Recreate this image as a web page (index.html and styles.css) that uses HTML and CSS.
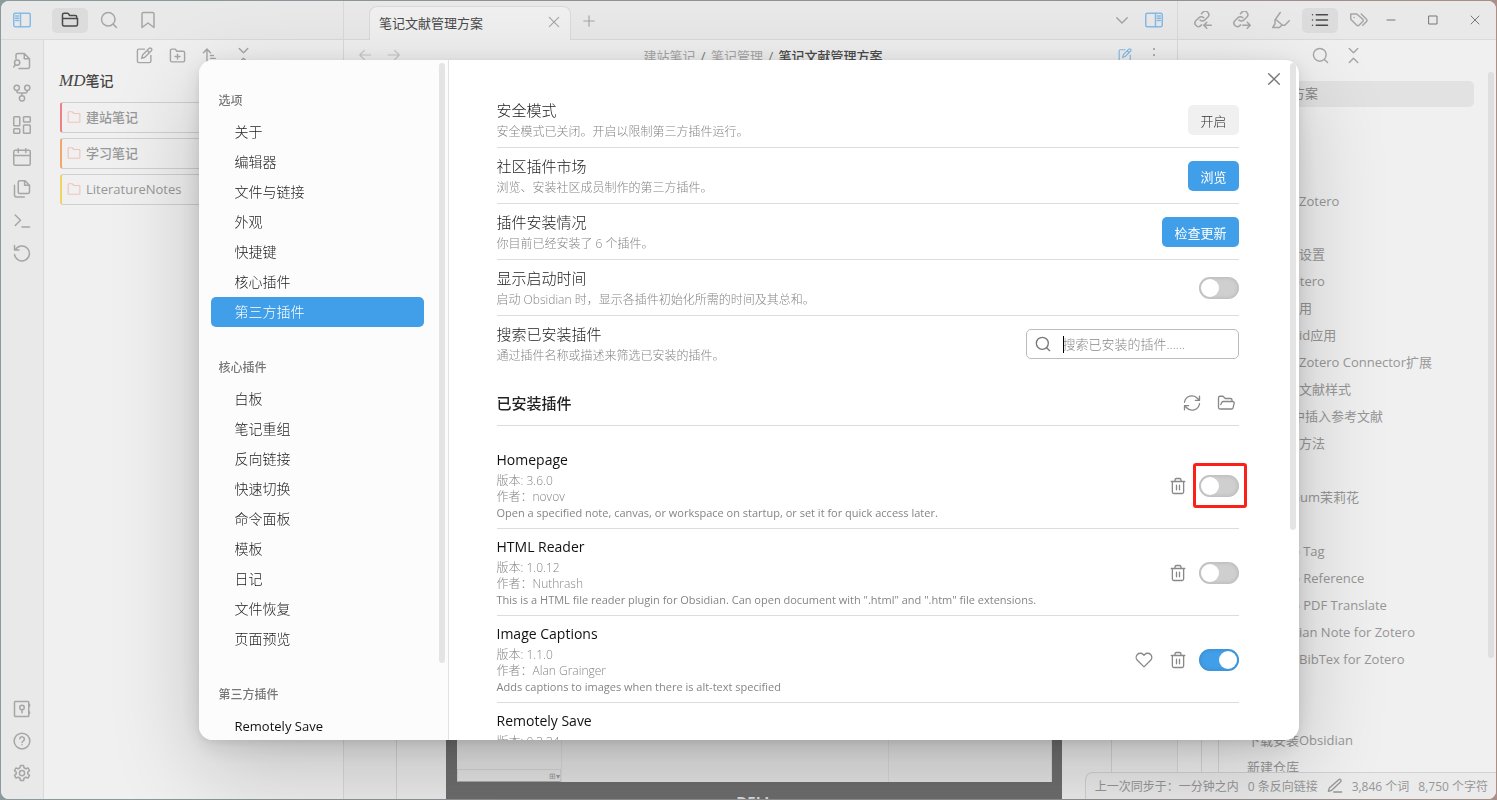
FILE: index.html
```html
<!DOCTYPE html>
<html lang="zh-CN">
<head>
<meta charset="utf-8">
<title>笔记文献管理方案</title>
<link rel="stylesheet" href="styles.css">
</head>
<body>
<svg class="sprite" aria-hidden="true">
  <symbol id="i-folder" viewBox="0 0 24 24"><path d="M20 20H4a2 2 0 0 1-2-2V5a2 2 0 0 1 2-2h4.500a2 2 0 0 1 1.600.800L11.500 6H19a2 2 0 0 1 2 2v2M2 10h20v8a2 2 0 0 1-2 2"/></symbol>
  <symbol id="i-search" viewBox="0 0 24 24"><circle cx="11" cy="11" r="9"/><path d="m22 22-4.500-4.500"/></symbol>
  <symbol id="i-bookmark" viewBox="0 0 24 24"><path d="m20 22-8-6-8 6V4a2 2 0 0 1 2-2h12a2 2 0 0 1 2 2z"/></symbol>
  <symbol id="i-side-left" viewBox="0 0 24 24"><rect x="1" y="3" width="22" height="18" rx="2"/><path d="M10 3v18M3.500 6.500h4M3.500 9.500h4M3.500 12.500h4"/></symbol>
  <symbol id="i-side-right" viewBox="0 0 24 24"><rect x="1" y="3" width="22" height="18" rx="2"/><path d="M14 3v18M16.500 6.500h4M16.500 9.500h4M16.500 12.500h4"/></symbol>
  <symbol id="i-file-search" viewBox="0 0 24 24"><path d="M4 9V4a2 2 0 0 1 2-2h9l7 7v11a2 2 0 0 1-2 2H8M15 2v7h7"/><circle cx="5.500" cy="14" r="3.500"/><path d="m1 20 2-3"/></symbol>
  <symbol id="i-fork" viewBox="0 0 24 24"><circle cx="5" cy="5" r="3.500"/><circle cx="19" cy="5" r="3.500"/><circle cx="12" cy="19" r="3.500"/><path d="M5 9v0a3 3 0 0 0 3 3h8a3 3 0 0 0 3-3M12 12v3"/></symbol>
  <symbol id="i-dashboard" viewBox="0 0 24 24"><rect x="1" y="1" width="8" height="12" rx="1"/><rect x="14" y="1" width="9" height="7" rx="1"/><rect x="14" y="12" width="9" height="11" rx="1"/><rect x="1" y="17" width="8" height="6" rx="1"/></symbol>
  <symbol id="i-calendar" viewBox="0 0 24 24"><rect x="1" y="3" width="22" height="20" rx="2"/><path d="M7 1v5M17 1v5M1 10h22"/></symbol>
  <symbol id="i-files" viewBox="0 0 24 24"><path d="M16 1H9a2 2 0 0 0-2 2v13a2 2 0 0 0 2 2h11a2 2 0 0 0 2-2V7zM15.500 1v6H22M2 7v13a2.500 2.500 0 0 0 2.500 2.500H15"/></symbol>
  <symbol id="i-terminal" viewBox="0 0 24 24"><path d="m3 18 7-7-7-7M12 20h10"/></symbol>
  <symbol id="i-undo" viewBox="0 0 24 24"><path d="M2 2v6h6M3 8a10 10 0 1 1-1 6"/></symbol>
  <symbol id="i-vault" viewBox="0 0 24 24"><rect x="2" y="2" width="19" height="20" rx="1"/><circle cx="12" cy="10" r="3"/><path d="M12 13v4M22 6v2M22 16v2"/></symbol>
  <symbol id="i-help" viewBox="0 0 24 24"><circle cx="12" cy="12" r="10.500"/><path d="M9 9a3 3 0 0 1 6 1c0 2-3 2.500-3 4M12 17v.1"/></symbol>
  <symbol id="i-gear" viewBox="0 0 24 24"><path d="M10 2h4l.7 3 2.300 1.300 3-1 2 3.500-2.300 2.100v2.200l2.300 2.100-2 3.500-3-1-2.300 1.300-.7 3h-4l-.7-3L7 17.700l-3 1-2-3.500 2.300-2.100v-2.200L2 8.800l2-3.500 3 1L9.300 5z"/><circle cx="12" cy="12" r="3.500"/></symbol>
  <symbol id="i-edit" viewBox="0 0 24 24"><path d="M12 3H4a2 2 0 0 0-2 2v15a2 2 0 0 0 2 2h15a2 2 0 0 0 2-2v-8M18.400 2a2.200 2.200 0 0 1 3.200 3.200L12.500 14.500 8 16l1.300-4.600zM16 5l3 3"/></symbol>
  <symbol id="i-folder-plus" viewBox="0 0 24 24"><path d="M20 21H4a2 2 0 0 1-2-2V5a2 2 0 0 1 2-2h5l2 3h9a2 2 0 0 1 2 2v11a2 2 0 0 1-2 2zM12 10v7M8.500 13.500h7"/></symbol>
  <symbol id="i-sort" viewBox="0 0 24 24"><path d="m2 8 5-5 5 5M7 3v18M12 12h4M12 16h7M12 20h10"/></symbol>
  <symbol id="i-collapse" viewBox="0 0 24 24"><path d="m6 22 6-6 6 6M6 2l6 6 6-6"/></symbol>
  <symbol id="i-folder-flat" viewBox="0 0 24 24"><path d="M21 21H3a1 1 0 0 1-1-1V4a1 1 0 0 1 1-1h6l3 3h9a1 1 0 0 1 1 1v13a1 1 0 0 1-1 1z"/></symbol>
  <symbol id="i-close" viewBox="0 0 24 24"><path d="M4 4l16 16M20 4 4 20"/></symbol>
  <symbol id="i-plus" viewBox="0 0 24 24"><path d="M3 12h18M12 3v18"/></symbol>
  <symbol id="i-left" viewBox="0 0 24 24"><path d="M11 4l-8 8 8 8M3 12h19"/></symbol>
  <symbol id="i-right" viewBox="0 0 24 24"><path d="m13 4 8 8-8 8M21 12H2"/></symbol>
  <symbol id="i-chevron" viewBox="0 0 24 24"><path d="m5 9 7 7 7-7"/></symbol>
  <symbol id="i-dots" viewBox="0 0 24 24"><path d="M12 4v.1M12 12v.1M12 20v.1"/></symbol>
  <symbol id="i-link-in" viewBox="0 0 24 24"><path d="M8 12a4.500 4.500 0 0 0 6.500 0l4-4a4.600 4.600 0 0 0-6.500-6.500L10 3.500M13 9a4.500 4.500 0 0 0-6.500 0l-4 4A4.600 4.600 0 0 0 9 19.500l1-1M23 19h-9M17 15l-4 4 4 4"/></symbol>
  <symbol id="i-link-out" viewBox="0 0 24 24"><path d="M8 12a4.500 4.500 0 0 0 6.500 0l4-4a4.600 4.600 0 0 0-6.500-6.500L10 3.500M13 9a4.500 4.500 0 0 0-6.500 0l-4 4A4.600 4.600 0 0 0 9 19.500l1-1M13 19h9M19 15l4 4-4 4"/></symbol>
  <symbol id="i-marker" viewBox="0 0 24 24"><path d="m11 2-7 10v5l-3 5h9l3-3h4l6-6M6 12l8 7"/></symbol>
  <symbol id="i-list" viewBox="0 0 24 24"><path d="M7 5h15M7 12h15M7 19h15M2 5v.1M2 12v.1M2 19v.1"/></symbol>
  <symbol id="i-tags" viewBox="0 0 24 24"><path d="M1 4v7l8 8a2 2 0 0 0 3 0l5-5a2 2 0 0 0 0-3L9 4zM15 4l7 7a2 2 0 0 1 0 3l-5 5M5.500 8.500v.1"/></symbol>
  <symbol id="i-min" viewBox="0 0 24 24"><path d="M4 12h16"/></symbol>
  <symbol id="i-max" viewBox="0 0 24 24"><rect x="4" y="4" width="16" height="16"/></symbol>
  <symbol id="i-refresh" viewBox="0 0 24 24"><path d="M2 11a10 10 0 0 1 17.500-5L22 8.500M22 3v5.500h-5.500M22 13a10 10 0 0 1-17.500 5L2 15.500M2 21v-5.500h5.500"/></symbol>
  <symbol id="i-folder-open" viewBox="0 0 24 24"><path d="m5 14 1.500-2.900A2 2 0 0 1 8.200 10H21a2 2 0 0 1 1.900 2.500l-1.500 6a2 2 0 0 1-1.900 1.500H4a2 2 0 0 1-2-2V5a2 2 0 0 1 2-2h4l3 3h7a2 2 0 0 1 2 2v2"/></symbol>
  <symbol id="i-trash" viewBox="0 0 24 24"><path d="M3 6h18M19.500 6v14a2 2 0 0 1-2 2h-11a2 2 0 0 1-2-2V6M8 6V4a2 2 0 0 1 2-2h4a2 2 0 0 1 2 2v2M10 11v6M14 11v6"/></symbol>
  <symbol id="i-heart" viewBox="0 0 24 24"><path d="M20.800 4.600a5.500 5.500 0 0 0-7.800 0L12 5.700l-1-1.100a5.500 5.500 0 0 0-7.800 7.800L12 21.200l8.800-8.800a5.500 5.500 0 0 0 0-7.800z"/></symbol>
  <symbol id="i-pen" viewBox="0 0 24 24"><path d="M10 21h12M17.500 2.500a2 2 0 0 1 3 3L7 18.500 2 20l1.500-5z"/></symbol>
</svg>

<div class="window">
  <section class="col col-left">
    <header class="bar">
      <button class="ico accent" aria-label="侧边栏"><svg><use href="#i-side-left"/></svg></button>
      <div class="tabs">
        <button class="ico tab-ico active" aria-label="文件列表"><svg><use href="#i-folder"/></svg></button>
        <button class="ico tab-ico" aria-label="搜索"><svg><use href="#i-search"/></svg></button>
        <button class="ico tab-ico" aria-label="书签"><svg><use href="#i-bookmark"/></svg></button>
      </div>
    </header>
    <div class="left-body">
      <nav class="ribbon">
        <button class="ico" aria-label="快速切换"><svg><use href="#i-file-search"/></svg></button>
        <button class="ico" aria-label="关系图谱"><svg><use href="#i-fork"/></svg></button>
        <button class="ico" aria-label="白板"><svg><use href="#i-dashboard"/></svg></button>
        <button class="ico" aria-label="日记"><svg><use href="#i-calendar"/></svg></button>
        <button class="ico" aria-label="模板"><svg><use href="#i-files"/></svg></button>
        <button class="ico" aria-label="命令面板"><svg><use href="#i-terminal"/></svg></button>
        <button class="ico" aria-label="同步"><svg><use href="#i-undo"/></svg></button>
        <span class="grow"></span>
        <button class="ico" aria-label="仓库"><svg><use href="#i-vault"/></svg></button>
        <button class="ico" aria-label="帮助"><svg><use href="#i-help"/></svg></button>
        <button class="ico" aria-label="设置"><svg><use href="#i-gear"/></svg></button>
      </nav>
      <div class="files">
        <div class="tools">
          <button class="ico" aria-label="新建笔记"><svg><use href="#i-edit"/></svg></button>
          <button class="ico" aria-label="新建文件夹"><svg><use href="#i-folder-plus"/></svg></button>
          <button class="ico" aria-label="排序"><svg><use href="#i-sort"/></svg></button>
          <button class="ico" aria-label="折叠"><svg><use href="#i-collapse"/></svg></button>
        </div>
        <h2 class="vault"><em>MD</em>笔记</h2>
        <ul class="tree">
          <li class="red"><svg><use href="#i-folder-flat"/></svg>建站笔记</li>
          <li class="orange"><svg><use href="#i-folder-flat"/></svg>学习笔记</li>
          <li class="yellow"><svg><use href="#i-folder-flat"/></svg>LiteratureNotes</li>
        </ul>
      </div>
    </div>
  </section>

  <section class="col col-main">
    <header class="bar bar-main">
      <div class="doc-tab"><span>笔记文献管理方案</span><button class="ico small" aria-label="关闭标签页"><svg><use href="#i-close"/></svg></button></div>
      <button class="ico small plus" aria-label="新标签页"><svg><use href="#i-plus"/></svg></button>
      <span class="grow"></span>
      <button class="ico" aria-label="标签列表"><svg><use href="#i-chevron"/></svg></button>
      <button class="ico accent" aria-label="右侧边栏"><svg><use href="#i-side-right"/></svg></button>
    </header>
    <div class="view-head">
      <button class="ico faint" aria-label="后退"><svg><use href="#i-left"/></svg></button>
      <button class="ico faint" aria-label="前进"><svg><use href="#i-right"/></svg></button>
      <div class="crumbs">建站笔记 <i>/</i> 笔记管理 <i>/</i> <b>笔记文献管理方案</b></div>
      <button class="ico small accent" aria-label="编辑"><svg><use href="#i-edit"/></svg></button>
      <button class="ico dots" aria-label="更多选项"><svg><use href="#i-dots"/></svg></button>
    </div>
    <div class="note">
      <div class="gutter"></div>
      <div class="photo">
        <div class="screen">
          <div class="pane"><div class="field"><span>⊞▾</span></div></div>
          <div class="pane"></div>
          <div class="pane"></div>
        </div>
        <div class="brand">DELL</div>
      </div>
      <div class="gutter gutter-right"></div>
    </div>
  </section>

  <section class="col col-right">
    <header class="bar bar-right">
      <div class="tabs">
        <button class="ico tab-ico" aria-label="反向链接"><svg><use href="#i-link-in"/></svg></button>
        <button class="ico tab-ico" aria-label="出链"><svg><use href="#i-link-out"/></svg></button>
        <button class="ico tab-ico" aria-label="标注"><svg><use href="#i-marker"/></svg></button>
        <button class="ico tab-ico active" aria-label="大纲"><svg><use href="#i-list"/></svg></button>
        <button class="ico tab-ico" aria-label="标签"><svg><use href="#i-tags"/></svg></button>
      </div>
      <div class="win-btns">
        <button class="ico" aria-label="最小化"><svg><use href="#i-min"/></svg></button>
        <button class="ico" aria-label="最大化"><svg><use href="#i-max"/></svg></button>
        <button class="ico" aria-label="关闭"><svg><use href="#i-close"/></svg></button>
      </div>
    </header>
    <div class="right-body">
      <div class="outline-col">
        <div class="tools tools-right">
          <button class="ico" aria-label="搜索"><svg><use href="#i-search"/></svg></button>
          <button class="ico" aria-label="折叠"><svg><use href="#i-collapse"/></svg></button>
        </div>
        <div class="guide"><ul class="outline">
          <li class="cut current">方案</li>
          <li></li><li></li><li></li>
          <li>Zotero</li>
          <li class="gap"></li>
          <li>设置</li>
          <li class="cut">otero</li>
          <li>用</li>
          <li>id应用</li>
          <li>Zotero Connector扩展</li>
          <li>文献样式</li>
          <li class="cut">中插入参考文献</li>
          <li>方法</li>
          <li></li>
          <li class="cut">num茉莉花</li>
          <li class="cut">e</li>
          <li class="cut">o Tag</li>
          <li class="cut">o Reference</li>
          <li class="cut">o PDF Translate</li>
          <li>ian Note for Zotero</li>
          <li>BibTex for Zotero</li>
          <li></li><li></li>
          <li class="top">下载安装Obsidian</li>
          <li class="top">新建仓库</li>
        </ul></div>
      </div>
      <div class="rail"><div class="thumb"></div></div>
    </div>
  </section>

  <footer class="status">
    <span>上一次同步于：一分钟之内</span>
    <span>0 条反向链接</span>
    <svg><use href="#i-pen"/></svg>
    <span>3,846 个词</span>
    <span>8,750 个字符</span>
  </footer>
</div>

<div class="backdrop">
  <div class="modal" role="dialog" aria-label="设置">
    <nav class="settings-nav">
      <div class="nav-scroll">
        <div class="group">
          <h3>选项</h3>
          <button>关于</button><button>编辑器</button><button>文件与链接</button><button>外观</button><button>快捷键</button><button>核心插件</button><button class="selected">第三方插件</button>
        </div>
        <div class="group">
          <h3>核心插件</h3>
          <button>白板</button><button>笔记重组</button><button>反向链接</button><button>快速切换</button><button>命令面板</button><button>模板</button><button>日记</button><button>文件恢复</button><button>页面预览</button>
        </div>
        <div class="group">
          <h3>第三方插件</h3>
          <button class="latin">Remotely Save</button>
        </div>
      </div>
      <div class="rail nav-rail"><div class="thumb"></div></div>
    </nav>
    <main class="content">
      <div class="setting">
        <div class="info"><div class="name">安全模式</div><div class="desc">安全模式已关闭。开启以限制第三方插件运行。</div></div>
        <button class="btn">开启</button>
      </div>
      <div class="setting">
        <div class="info"><div class="name">社区插件市场</div><div class="desc">浏览、安装社区成员制作的第三方插件。</div></div>
        <button class="btn cta">浏览</button>
      </div>
      <div class="setting">
        <div class="info"><div class="name">插件安装情况</div><div class="desc">你目前已经安装了 6 个插件。</div></div>
        <button class="btn cta">检查更新</button>
      </div>
      <div class="setting">
        <div class="info"><label class="name" for="t-time">显示启动时间</label><div class="desc">启动 Obsidian 时，显示各插件初始化所需的时间及其总和。</div></div>
        <input class="toggle" type="checkbox" id="t-time">
      </div>
      <div class="setting last">
        <div class="info"><label class="name" for="q">搜索已安装插件</label><div class="desc">通过插件名称或描述来筛选已安装的插件。</div></div>
        <div class="search"><svg><use href="#i-search"/></svg><input id="q" type="text" placeholder="搜索已安装的插件......"><span class="caret"></span></div>
      </div>
      <div class="section-head">
        <h2>已安装插件</h2>
        <button class="ico act" aria-label="重新加载插件"><svg><use href="#i-refresh"/></svg></button>
        <button class="ico act" aria-label="打开插件文件夹"><svg><use href="#i-folder-open"/></svg></button>
      </div>
      <div class="setting plugin">
        <div class="info"><label class="name" for="p1">Homepage</label><div class="desc">版本: 3.6.0<br>作者：novov<p>Open a specified note, canvas, or workspace on startup, or set it for quick access later.</p></div></div>
        <button class="ico act" aria-label="卸载"><svg><use href="#i-trash"/></svg></button>
        <span class="marked"><input class="toggle" type="checkbox" id="p1"></span>
      </div>
      <div class="setting plugin">
        <div class="info"><label class="name" for="p2">HTML Reader</label><div class="desc">版本: 1.0.12<br>作者：Nuthrash<p>This is a HTML file reader plugin for Obsidian. Can open document with ".html" and ".htm" file extensions.</p></div></div>
        <button class="ico act" aria-label="卸载"><svg><use href="#i-trash"/></svg></button>
        <input class="toggle" type="checkbox" id="p2">
      </div>
      <div class="setting plugin">
        <div class="info"><label class="name" for="p3">Image Captions</label><div class="desc">版本: 1.1.0<br>作者：Alan Grainger<p>Adds captions to images when there is alt-text specified</p></div></div>
        <button class="ico act" aria-label="赞助"><svg><use href="#i-heart"/></svg></button>
        <button class="ico act" aria-label="卸载"><svg><use href="#i-trash"/></svg></button>
        <input class="toggle" type="checkbox" id="p3" checked>
      </div>
      <div class="setting plugin">
        <div class="info"><div class="name">Remotely Save</div><div class="desc">版本: 0.3.34</div></div>
      </div>
    </main>
    <div class="rail modal-rail"><div class="thumb"></div></div>
    <button class="ico modal-close" aria-label="关闭设置"><svg><use href="#i-close"/></svg></button>
  </div>
</div>
</body>
</html>
```

FILE: styles.css
```css
* { box-sizing: border-box; }
html, body { height: 100%; margin: 0; }
body {
  padding: 1px;
  overflow: hidden;
  background: linear-gradient(to right, #8b9a9c, #8e9196 40%, #8e9196 70%, #a98f86);
  font-family: "Open Sans", "Noto Sans CJK SC", sans-serif;
  font-size: 13px;
  color: #979797;
}
h2, h3, ul, p { margin: 0; padding: 0; font-size: inherit; }
ul { list-style: none; }
button, input { font: inherit; color: inherit; }
button { border: 0; padding: 0; background: none; }
.sprite { display: none; }
svg { width: 18px; height: 18px; flex: none; fill: none; stroke: currentColor; stroke-width: 2; stroke-linecap: round; stroke-linejoin: round; }
.grow { flex: 1; }
.ico { display: flex; align-items: center; justify-content: center; flex: none; color: #a6a6a6; }
.ico.small svg { width: 14px; height: 14px; }
.ico.accent { color: #86bbe6; }
.ico.faint { color: #c6c6c6; }

/* App window */
.window { position: relative; display: flex; height: 100%; border-radius: 8px; overflow: hidden; background: #f0f0f0; }
.col { display: flex; flex-direction: column; min-width: 0; }
.col-left { width: 343px; border-right: 1px solid #dadada; }
.col-main { flex: 1; border-right: 1px solid #dadada; }
.col-right { width: 318px; }
.bar { display: flex; align-items: center; height: 39px; flex: none; background: #e9e9e9; border-bottom: 1px solid #dadada; }
.col-left .bar { padding-left: 12px; gap: 21px; }
.tabs { display: flex; gap: 3px; }
.tab-ico { width: 36px; height: 25px; border-radius: 5px; }
.tab-ico.active { background: #dcdcdc; color: #4a4a4a; }

.left-body { display: flex; flex: 1; min-height: 0; }
.ribbon { display: flex; flex-direction: column; width: 43px; padding: 5px 0 10px; background: #e9e9e9; border-right: 1px solid #dadada; }
.ribbon .ico { height: 32px; }
.files { flex: 1; padding-left: 15px; }
.tools { display: flex; height: 30px; padding-left: 69px; }
.tools .ico { width: 33px; }
.tools svg { width: 17px; height: 17px; }
.vault { font-size: 14px; line-height: 22px; font-weight: 500; color: #444; }
.vault em { font-family: "Liberation Serif", serif; font-size: 17px; font-style: italic; font-weight: 500; }
.tree { display: flex; flex-direction: column; gap: 5px; padding: 10px 0 0 1px; }
.tree li { display: flex; align-items: center; gap: 5px; height: 31px; padding: 0 0 2px 5px; border: 1px solid #cfcfcf; border-left: 2px solid; border-radius: 3px; font-weight: 500; line-height: 20px; }
.tree svg { width: 14px; height: 14px; stroke: #f0c4bb; }
.tree .red { border-left-color: #ee7f85; }
.tree .orange { border-left-color: #f0a66c; }
.tree .yellow { border-left-color: #f0d367; }

.bar-main { padding: 5px 14px 0 25px; }
.doc-tab { display: flex; align-items: center; justify-content: space-between; width: 202px; height: 35px; align-self: flex-start; padding: 0 9px 4px; background: #f0f0f0; border: 1px solid #dadada; border-bottom: 0; border-radius: 8px 8px 0 0; color: #4a4a4a; }
.bar-main .plus { margin-left: 11px; padding-bottom: 4px; }
.bar-main .grow ~ .ico { padding-bottom: 5px; }
.bar-main .ico:last-child { margin-left: 14px; }
.view-head { display: flex; align-items: center; height: 30px; padding: 0 14px 0 6px; background: #f0f0f0; }
.view-head .faint { width: 29px; }
.view-head .faint svg { width: 14px; height: 14px; }
.view-head .dots { margin-left: 13px; }
.dots svg { stroke-width: 3; }
.crumbs { flex: 1; text-align: center; color: #a6a6a6; white-space: nowrap; }
.crumbs i { margin: 0 2px; font-style: normal; color: #777; }
.crumbs b { font-weight: 500; color: #4a4a4a; }

.note { display: flex; flex: 1; min-height: 0; background: #ececec; }
.gutter { width: 53px; border-right: 1px solid #d4d4d4; }
.gutter-right { width: 66px; border-right: 0; border-left: 1px solid #d4d4d4; }
.photo { display: flex; flex-direction: column; flex: 1; margin: 0 49px; padding: 0 10px 0 11px; background: #6e6e6e; }
.screen { display: flex; flex: 1; background: #e4e4e4; }
.pane { display: flex; flex: 1 1 165px; flex-direction: column; justify-content: flex-end; border-right: 1px solid #d8d8d8; }
.pane:first-child { flex: 0 0 105px; }
.pane:nth-child(2) { flex-grow: 2; flex-basis: 330px; }
.field { height: 13px; border: 1px solid #d2d2d2; border-bottom-color: #aaa; font-size: 8px; line-height: 11px; text-align: right; color: #999; }
.brand { height: 17px; padding-top: 10px; overflow: hidden; text-align: center; font-weight: 700; font-size: 15px; line-height: 18px; color: #ddd; }

.bar-right { padding-left: 7px; }
.win-btns { display: flex; flex: 1; justify-content: space-between; padding: 0 15px 0 8px; }
.win-btns .ico { color: #777; }
.win-btns svg { width: 12px; height: 12px; }
.right-body { display: flex; flex: 1; min-height: 0; }
.outline-col { flex: 1; min-width: 0; }
.tools-right { height: 41px; padding: 0 0 10px 126px; }
.guide { height: 100%; margin-left: 23px; border-left: 1px solid #d6d6d6; }
.outline { height: 100%; margin: 0 14px 0 16px; border-left: 1px solid #d6d6d6; white-space: nowrap; }
.outline li { height: 27px; padding-left: 80px; line-height: 25px; }
.outline .gap { height: 26px; }
.outline .cut { padding-left: 73px; }
.outline .top { padding-left: 28px; }
.outline .current { height: 26px; margin-bottom: 1px; border-radius: 5px; background: #e2e2e2; color: #888; }
.rail { width: 8px; flex: none; }
.thumb { width: 6px; height: 586px; border-radius: 3px; background: #dfdfdf; }
.right-body .rail { padding-top: 32px; }

.status { position: absolute; right: 0; bottom: 0; display: flex; align-items: center; height: 27px; padding: 0 8px 0 9px; gap: 9px; border: 1px solid #d2d2d2; border-width: 1px 0 0 1px; border-top-left-radius: 8px; background: #ebebeb; font-size: 12px; }
.status svg { width: 16px; height: 16px; }

/* Settings dialog */
.backdrop { position: fixed; inset: 0; display: flex; align-items: center; justify-content: center; }
.modal { position: relative; display: flex; width: 1100px; max-width: 96vw; height: 85vh; border-radius: 14px; overflow: hidden; background: #fff; box-shadow: 0 2px 7px rgba(0,0,0,.07), 0 6px 25px rgba(0,0,0,.11), 0 30px 90px rgba(0,0,0,.2); }
.settings-nav { display: flex; width: 250px; flex: none; background: #fcfcfc; border-right: 1px solid #e2e2e2; }
.nav-scroll { display: flex; flex: 1; flex-direction: column; gap: 29px; padding: 29px 15px 0 12px; overflow: hidden; }
.group { display: flex; flex: none; flex-direction: column; }
.group h3 { margin-bottom: 4px; padding-left: 8px; font-size: 12px; line-height: 24px; font-weight: 500; color: #777; }
.group button { height: 30px; padding-left: 24px; border-radius: 5px; text-align: left; font-size: 14px; line-height: 20px; font-weight: 300; color: #222; }
.group .selected { background: #419ee8; color: #fff; }
.group .latin { font-size: 13px; font-weight: 400; color: #111; }
.nav-rail { padding: 3px 0 0; width: 9px; }
.nav-rail .thumb { height: 600px; background: #e4e4e4; }
.content { flex: 1; min-width: 0; padding: 32px 51px 0 48px; overflow: hidden; }
.modal-rail { width: 9px; padding-top: 3px; }
.modal-rail .thumb { height: 467px; background: #e4e4e4; }
.modal-close { position: absolute; top: 11px; right: 17px; color: #777; }
.modal-close svg { width: 16px; height: 16px; }
.setting { display: flex; align-items: center; gap: 8px; padding: 8px 0 7px; border-bottom: 1px solid #dcdcdc; }
.setting.last { border-bottom: 0; }
.info { flex: 1; min-width: 0; }
.name { display: block; margin-bottom: 4px; font-size: 15px; line-height: 20px; font-weight: 300; color: #222; }
.desc { font-size: 12px; line-height: 16px; color: #858585; font-weight: 300; }
.btn { height: 30px; padding: 0 12px; border-radius: 5px; background: #f0f0f0; color: #333; font-weight: 300; }
.btn.cta { background: #419ee8; color: #fff; font-weight: 400; }
.toggle { appearance: none; width: 40px; height: 22px; margin: 0; padding: 2px; flex: none; display: flex; border-radius: 11px; background: #cfcfcf; box-shadow: inset 0 0 4px rgba(0,0,0,.16); }
.toggle::before { content: ""; width: 18px; height: 18px; border-radius: 50%; background: #fff; }
.toggle:checked { justify-content: flex-end; background: #419ee8; }
.search { position: relative; display: flex; align-items: center; width: 213px; height: 30px; padding-left: 8px; gap: 12px; border: 1px solid #bcbcbc; border-radius: 5px; color: #777; }
.search svg { width: 16px; height: 16px; }
.search input { flex: 1; min-width: 0; padding: 0; border: 0; outline: 0; background: none; font-weight: 300; }
.search input::placeholder { color: #888; }
.caret { position: absolute; left: 36px; top: 6px; width: 1px; height: 17px; background: #000; }
.section-head { display: flex; align-items: center; gap: 8px; margin: 15px 0 16px; padding-bottom: 5px; border-bottom: 1px solid #dcdcdc; }
.section-head h2 { flex: 1; font-size: 15px; line-height: 34px; font-weight: 500; color: #222; }
.act { width: 26px; height: 26px; color: #888; }
.act svg { stroke-width: 1.75; }
.plugin .name { margin-bottom: 3px; font-size: 14px; font-weight: 400; color: #111; }
.plugin .desc { font-weight: 300; }
.plugin p { font-size: 11px; font-weight: 400; }
.marked { position: relative; flex: none; }
.marked::after { content: ""; position: absolute; inset: -12px -8px -11px -6px; border: 3px solid #fb2018; border-radius: 3px; pointer-events: none; }
```
